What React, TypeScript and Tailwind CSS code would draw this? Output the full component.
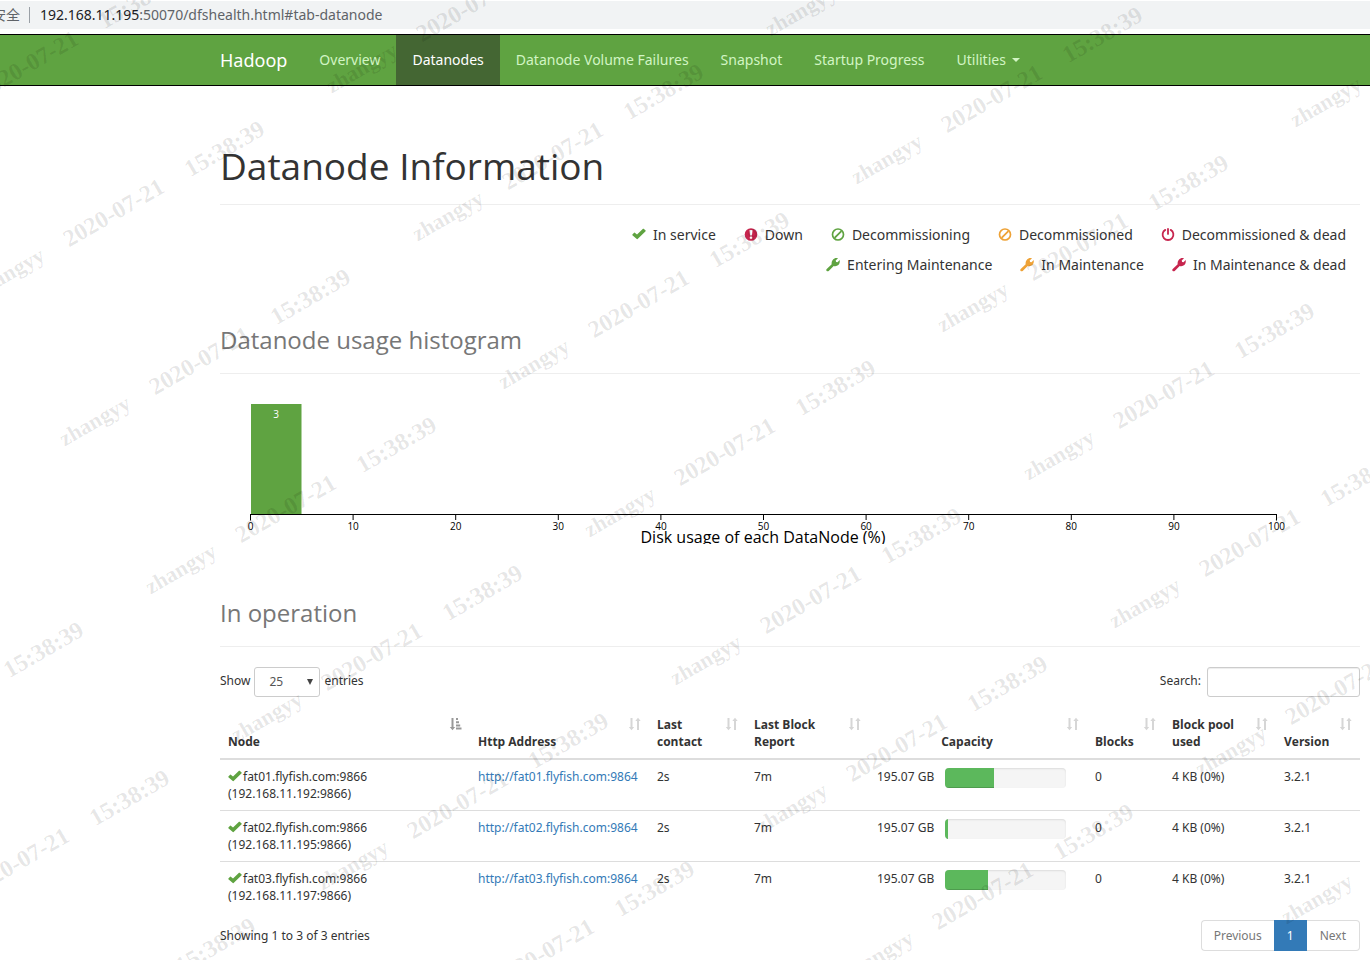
import { useState } from 'react'
import type { ReactNode } from 'react'

const NAV = ['Overview', 'Datanodes', 'Datanode Volume Failures', 'Snapshot', 'Startup Progress']

const NODES = [
  { name: 'fat01.flyfish.com', ip: '192.168.11.192', used: 40.5 },
  { name: 'fat02.flyfish.com', ip: '192.168.11.195', used: 2.5 },
  { name: 'fat03.flyfish.com', ip: '192.168.11.197', used: 35.5 },
]

const COLUMNS = [
  { label: 'Node', width: 'w-[250px]' },
  { label: 'Http Address', width: 'w-[179px]' },
  { label: 'Last contact', width: 'w-[97px]' },
  { label: 'Last Block Report', width: 'w-[123px]' },
  { label: 'Capacity', width: 'w-[218px]' },
  { label: 'Blocks', width: 'w-[77px]' },
  { label: 'Block pool used', width: 'w-[112px]' },
  { label: 'Version', width: 'w-[84px]' },
]

function Icon({ className = '', children }: { className?: string; children: ReactNode }) {
  return (
    <svg viewBox="0 0 14 14" className={`h-[14px] w-[14px] shrink-0 ${className}`} fill="currentColor" aria-hidden="true">
      {children}
    </svg>
  )
}

const OkIcon = ({ className }: { className?: string }) => (
  <Icon className={className}>
    <path d="M.4 6.6 2.1 4.7q.3-.3.7 0L5 6.6 11 .8q.4-.3.7 0l1.9 1.700q.4.3 0 .7L5.6 11.100q-.4.3-.8 0L.4 7.300q-.3-.3 0-.7z" />
  </Icon>
)

const DownIcon = ({ className }: { className?: string }) => (
  <Icon className={className}>
    <circle cx="7" cy="6.5" r="6.3" />
    <path d="M5.9 2.1h2.2q.4 0 .4.5L8 7q0 .4-.4.4H6.4q-.4 0-.4-.4l-.5-4.4q0-.5.4-.5zM6.2 8.500h1.6q.4 0 .4.4v1.4q0 .4-.4.4H6.2q-.4 0-.4-.4V8.900q0-.4.4-.4z" fill="#fff" />
  </Icon>
)

const BanIcon = ({ className }: { className?: string }) => (
  <Icon className={className}>
    <circle cx="7" cy="6.5" r="5.5" fill="none" stroke="currentColor" strokeWidth="1.7" />
    <path d="M3.6 9.900 10.400 3.100" stroke="currentColor" strokeWidth="1.8" />
  </Icon>
)

const OffIcon = ({ className }: { className?: string }) => (
  <Icon className={className}>
    <path d="M4.300 1.900a5.400 5.400 0 1 0 5.400 0" fill="none" stroke="currentColor" strokeWidth="1.8" strokeLinecap="round" />
    <path d="M7 .9v5" stroke="currentColor" strokeWidth="1.8" strokeLinecap="round" />
  </Icon>
)

const WrenchIcon = ({ className }: { className?: string }) => (
  <Icon className={className}>
    <path d="M.7 12.900q-.9-.9 0-1.900L5.700 6.300C5.200 3.800 6.400 1.300 8.500.4 9.700-.1 11-.1 12 .3L9.700 2.500 10.100 3.900 11.500 4.200 13.700 2.100C14.100 4.500 13.100 6.700 11.400 7.600 10.100 8.300 8.700 8.300 7.700 8L2.700 12.900q-1 .9-2 0z" />
  </Icon>
)

function SortIcon({ active }: { active: boolean }) {
  return (
    <Icon className={`absolute top-[9px] right-[7px] ${active ? 'text-[#999999]' : 'text-[#d6d6d6]'}`}>
      <path d="M2.500 1h2v9h1.700L3.500 13.200.8 10h1.700z" />
      {active ? (
        <path d="M7 1h2v2H7zM7 4.200h3v2H7zM7 7.400h4.200v2H7zM7 10.600h5.500v2H7z" />
      ) : (
        <path d="M9 13h2V4h1.700L10 .8 7.300 4H9z" />
      )}
    </Icon>
  )
}

const LEGEND = [
  { label: 'In service', icon: <OkIcon className="text-[#5fa341]" /> },
  { label: 'Down', icon: <DownIcon className="text-[#c7254e]" /> },
  { label: 'Decommissioning', icon: <BanIcon className="text-[#5fa341]" /> },
  { label: 'Decommissioned', icon: <BanIcon className="text-[#eea236]" /> },
  { label: 'Decommissioned & dead', icon: <OffIcon className="text-[#c7254e]" /> },
  { label: 'Entering Maintenance', icon: <WrenchIcon className="text-[#5fa341]" /> },
  { label: 'In Maintenance', icon: <WrenchIcon className="text-[#eea236]" /> },
  { label: 'In Maintenance & dead', icon: <WrenchIcon className="text-[#c7254e]" /> },
]

function Histogram() {
  const ticks = Array.from({ length: 11 }, (_, i) => i * 10)
  return (
    <svg viewBox="0 0 1140 150" className="mt-5 block w-full overflow-hidden font-['Open_Sans',sans-serif]">
      <rect x="31" y="10" width="50.5" height="110" fill="#5fa341" />
      <text x="56" y="24" textAnchor="middle" fontSize="10" fill="#fff">3</text>
      <path d="M30.5 126.5v-6h1026v6" fill="none" stroke="#000" />
      {ticks.map(t => (
        <g key={t} transform={`translate(${30.5 + t * 10.26} 0)`}>
          <path d="M0 120v6" stroke="#000" />
          <text y="136" textAnchor="middle" fontSize="10">{t}</text>
        </g>
      ))}
      <text x="543" y="149" textAnchor="middle" fontSize="16">Disk usage of each DataNode (%)</text>
    </svg>
  )
}

// Diagonal user/time stamp repeated over the whole window
function Watermark() {
  const marks: { x: number; y: number }[] = []
  for (let col = -2; col <= 3; col++) {
    for (let row = -6; row <= 10; row++) {
      const x = 67 + row * 86 + col * 439
      const y = 447 + row * 148 - col * 57
      if (x > -290 && x < 1370 && y > 0 && y < 1130) marks.push({ x, y })
    }
  }
  return (
    <div aria-hidden="true" className="pointer-events-none absolute inset-0 z-10 overflow-hidden font-['Liberation_Serif',serif] text-[24px] leading-6 font-bold text-black/10">
      {marks.map(({ x, y }) => (
        <div
          key={`${x},${y}`}
          className="absolute flex origin-bottom-left whitespace-pre"
          style={{ left: x, top: y - 20, transform: 'rotate(-30deg)' }}
        >
          <span className="w-[104px] text-[22px]">zhangyy</span>
          <span className="w-[140px]">2020-07-21</span>
          <span>15:38:39</span>
        </div>
      ))}
    </div>
  )
}

export default function App() {
  const [pageSize, setPageSize] = useState('25')
  const [query, setQuery] = useState('')
  const rows = NODES.filter(n => n.name.includes(query) || n.ip.includes(query))

  return (
    <div className="relative min-h-screen overflow-hidden bg-white font-['Noto_Sans','Noto_Sans_CJK_SC',sans-serif] text-xs leading-[17px] text-[#333333]">
      {/* Address bar */}
      <div className="border-t border-b-5 border-white bg-[#f1f3f4]">
        <div className="-ml-2 flex h-7 items-center text-sm text-[#5f6368]">
          <span>安全</span>
          <span className="mr-[10px] ml-[9px] h-4 w-px bg-[#9aa0a6]" />
          <span><span className="text-[#202124]">192.168.11.195</span>:50070/dfshealth.html#tab-datanode</span>
        </div>
      </div>

      <nav className="border-y border-black bg-[#5fa341] pl-[204px] text-sm text-[#d2f5c4]">
        <div className="flex h-[50px] items-stretch">
          <a href="#top" className="flex items-center px-4 text-lg text-white">Hadoop</a>
          {NAV.map(item => (
            <a
              key={item}
              href={`#${item.toLowerCase().replaceAll(' ', '-')}`}
              className={`flex items-center px-4 whitespace-nowrap ${item === 'Datanodes' ? 'bg-[#446633] text-white' : ''}`}
            >
              {item}
            </a>
          ))}
          <button className="flex items-center gap-1.5 px-4">
            Utilities
            <span className="border-x-4 border-t-4 border-x-transparent border-t-current" />
          </button>
        </div>
      </nav>

      <main className="pr-[10px] pl-[220px]">
        <h1 className="border-b border-[#eeeeee] pt-[57px] pb-[15px] font-['Open_Sans',sans-serif] text-[37px] leading-[46px]">Datanode Information</h1>

        <ul className="mt-[15px] ml-auto flex max-w-[750px] flex-wrap justify-end gap-x-7 pr-[14px] text-sm leading-[30px]">
          {LEGEND.map(({ label, icon }) => (
            <li key={label} className="flex items-center gap-[7px]">
              {icon}
              {label}
            </li>
          ))}
        </ul>

        <h2 className="mt-[44px] border-b border-[#eeeeee] pb-[17px] font-['Open_Sans',sans-serif] text-2xl leading-8 text-[#777777]">Datanode usage histogram</h2>
        <Histogram />

        <h2 className="mt-[53px] border-b border-[#eeeeee] pb-[17px] font-['Open_Sans',sans-serif] text-2xl leading-8 text-[#777777]">In operation</h2>

        <div className="mt-5 flex justify-between leading-7">
          <label className="flex gap-1">
            Show
            <span className="relative">
              <select
                value={pageSize}
                onChange={e => setPageSize(e.target.value)}
                className="block h-[30px] w-[66px] appearance-none rounded-[3px] border border-[#cccccc] bg-white pl-[14px] text-[#555555]"
              >
                <option>10</option>
                <option>25</option>
                <option>50</option>
              </select>
              <svg viewBox="0 0 6 6" className="pointer-events-none absolute top-3 right-[7px] h-1.5 w-1.5 fill-[#444444]">
                <path d="M0 0h6L3 6z" />
              </svg>
            </span>
            entries
          </label>
          <label className="flex gap-1.5">
            Search:
            <input
              type="search"
              value={query}
              onChange={e => setQuery(e.target.value)}
              className="h-[30px] w-[153px] rounded-[3px] border border-[#cccccc] bg-white px-2.5 shadow-[inset_0_1px_1px_rgba(0,0,0,0.075)]"
            />
          </label>
        </div>

        <table className="mt-[11px] w-full table-fixed border-collapse">
          <thead>
            <tr className="border-b-2 border-[#dddddd]">
              {COLUMNS.map(({ label, width }) => (
                <th
                  key={label}
                  className={`relative py-2 pr-[30px] pl-2 align-bottom font-['Open_Sans',sans-serif] font-bold ${width} ${label === 'Capacity' ? 'text-center' : 'text-left'}`}
                >
                  {label}
                  <SortIcon active={label === 'Node'} />
                </th>
              ))}
            </tr>
          </thead>
          <tbody>
            {rows.map(({ name, ip, used }) => (
              <tr key={name} className="border-t border-[#dddddd] align-top first:border-t-0">
                <td className="p-2">
                  <span className="flex items-center gap-px"><OkIcon className="text-[#5fa341]" />{name}:9866</span>
                  ({ip}:9866)
                </td>
                <td className="p-2"><a href={`http://${name}:9864`} className="text-[#337ab7]">http://{name}:9864</a></td>
                <td className="p-2">2s</td>
                <td className="p-2">7m</td>
                <td className="p-2">
                  <div className="flex gap-[11px]">
                    <span className="whitespace-nowrap">195.07 GB</span>
                    <div className="h-5 w-3/5 overflow-hidden rounded bg-[#f5f5f5] shadow-[inset_0_1px_2px_rgba(0,0,0,0.1)]">
                      <div className="h-full bg-[#5cb85c] shadow-[inset_0_-1px_0_rgba(0,0,0,0.15)]" style={{ width: `${used}%` }} />
                    </div>
                  </div>
                </td>
                <td className="p-2">0</td>
                <td className="p-2">4 KB (0%)</td>
                <td className="p-2">3.2.1</td>
              </tr>
            ))}
          </tbody>
        </table>

        <div className="mt-2 flex items-center justify-between">
          <p>Showing 1 to {rows.length} of 3 entries</p>
          <div className="flex h-[31px] rounded text-[#777777]">
            <button className="rounded-l border border-r-0 border-[#dddddd] px-3">Previous</button>
            <button className="bg-[#337ab7] px-[13px] text-white">1</button>
            <button className="rounded-r border border-l-0 border-[#dddddd] px-[13px]">Next</button>
          </div>
        </div>
      </main>

      <Watermark />
    </div>
  )
}
